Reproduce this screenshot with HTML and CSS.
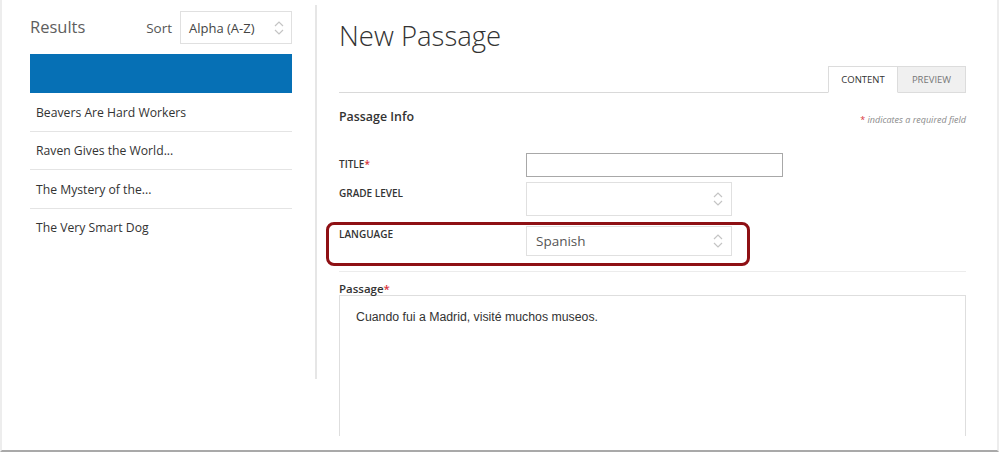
FILE: index.html
```html
<!DOCTYPE html>
<html>
<head>
<meta charset="utf-8">
<link rel="stylesheet" href="styles.css">
</head>
<body>
<div class="frame">
  <aside class="sidebar">
    <div class="side-head">
      <h2 class="results-title">Results</h2>
      <span class="sort-label">Sort</span>
      <div class="select sort-select">
        <span>Alpha (A-Z)</span>
        <svg class="arrows" width="10" height="18" viewBox="0 0 10 18"><path d="M1 7 L5 3 L9 7 M1 11 L5 15 L9 11" fill="none" stroke="#c4c4c4" stroke-width="1.2"/></svg>
      </div>
    </div>
    <div class="selected-bar"></div>
    <ul class="results">
      <li>Beavers Are Hard Workers</li>
      <li>Raven Gives the World...</li>
      <li>The Mystery of the...</li>
      <li>The Very Smart Dog</li>
    </ul>
  </aside>
  <div class="divider"></div>
  <main class="main">
    <h1 class="page-title">New Passage</h1>
    <div class="tabs-row">
      <div class="tabs">
        <span class="tab tab-active">CONTENT</span>
        <span class="tab tab-inactive">PREVIEW</span>
      </div>
    </div>
    <div class="info-row">
      <h3 class="section-title">Passage Info</h3>
      <span class="req-note"><span class="star">*</span> indicates a required field</span>
    </div>
    <div class="form-row row-title">
      <label class="field-label">TITLE<span class="star">*</span></label>
      <div class="text-input"></div>
    </div>
    <div class="form-row row-grade">
      <label class="field-label">GRADE LEVEL</label>
      <div class="select field-select grade-select">
        <span></span>
        <svg class="arrows" width="10" height="18" viewBox="0 0 10 18"><path d="M1 7 L5 3 L9 7 M1 11 L5 15 L9 11" fill="none" stroke="#c4c4c4" stroke-width="1.2"/></svg>
      </div>
    </div>
    <div class="form-row row-language">
      <label class="field-label lang-label">LANGUAGE</label>
      <div class="select field-select lang-select">
        <span>Spanish</span>
        <svg class="arrows" width="10" height="18" viewBox="0 0 10 18"><path d="M1 7 L5 3 L9 7 M1 11 L5 15 L9 11" fill="none" stroke="#c4c4c4" stroke-width="1.2"/></svg>
      </div>
      <div class="highlight"></div>
    </div>
    <div class="separator"></div>
    <div class="passage-label">Passage<span class="star">*</span></div>
    <div class="passage-box">Cuando fui a Madrid, visité muchos museos.</div>
  </main>
</div>
</body>
</html>
```
FILE: styles.css
```css
html, body {
  margin: 0;
  padding: 0;
  background: #fff;
}
body {
  font-family: "Open Sans", "Liberation Sans", sans-serif;
  color: #333;
}
.frame {
  width: 999px;
  height: 452px;
  box-sizing: border-box;
  border-left: 2px solid #ededed;
  border-right: 2px solid #ededed;
  border-bottom: 2px solid #a9a9a9;
  display: flex;
  align-items: flex-start;
}
.sidebar {
  flex: 0 0 262px;
  margin-left: 28px;
  padding-top: 11px;
}
.side-head {
  display: flex;
  align-items: center;
  height: 33px;
}
.results-title {
  flex: 1;
  margin: 0;
  font-size: 16.5px;
  font-weight: 400;
  color: #5e5e5e;
  line-height: 24px;
  position: relative;
  top: -1px;
}
.sort-label {
  font-size: 13.5px;
  color: #555;
  margin-right: 8px;
}
.select {
  box-sizing: border-box;
  border: 1px solid #e0e0e0;
  background: #fff;
  display: flex;
  align-items: center;
  justify-content: space-between;
  padding: 0 7px 0 8px;
}
.sort-select {
  flex: 0 0 112px;
  height: 33px;
  font-size: 13px;
  color: #444;
}
.arrows {
  display: block;
  flex: none;
}
.selected-bar {
  margin-top: 10px;
  height: 39px;
  background: #0670b5;
}
.results {
  list-style: none;
  margin: 0;
  padding: 0;
}
.results li {
  height: 36px;
  padding-top: 1.5px;
  line-height: 36px;
  padding-left: 6px;
  font-size: 12.2px;
  color: #333;
  border-bottom: 1px solid #e4e4e4;
}
.results li:last-child {
  border-bottom: none;
}
.divider {
  flex: 0 0 2px;
  margin-left: 23px;
  margin-top: 5px;
  height: 374px;
  background: #e6e6e6;
}
.main {
  flex: 0 0 627px;
  margin-left: 22px;
  padding-top: 18px;
}
.page-title {
  margin: 0;
  font-size: 27.5px;
  font-weight: 300;
  line-height: 36px;
  color: #333;
}
.tabs-row {
  margin-top: 12px;
  display: flex;
  justify-content: flex-end;
  border-bottom: 1px solid #d9d9d9;
}
.tabs {
  display: flex;
  flex: none;
  margin-bottom: -1px;
}
.tab {
  display: block;
  box-sizing: border-box;
  height: 27px;
  line-height: 25px;
  font-size: 9.5px;
  text-align: center;
  border: 1px solid #dcdcdc;
}
.tab-active {
  flex: 0 0 70px;
  width: 70px;
  background: #fff;
  color: #333;
  border-bottom-color: #fff;
}
.tab-inactive {
  flex: 0 0 68px;
  width: 68px;
  border-left: none;
  background: #f0f0f0;
  color: #777;
}
.info-row {
  margin-top: 15px;
  display: flex;
  justify-content: space-between;
  align-items: center;
  height: 18px;
}
.section-title {
  margin: 0;
  font-size: 12.4px;
  font-weight: 600;
  color: #333;
  line-height: 18px;
}
.req-note {
  font-size: 9px;
  font-style: italic;
  color: #8a8a8a;
  padding-top: 4px;
}
.star {
  color: #d9343a;
  font-style: normal;
}
.form-row {
  display: flex;
  align-items: flex-start;
  position: relative;
}
.row-title {
  margin-top: 27px;
}
.row-grade {
  margin-top: 5px;
}
.row-language {
  margin-top: 10px;
}
.field-label {
  flex: 0 0 187px;
  font-size: 10px;
  font-weight: 600;
  line-height: 14px;
  padding-top: 4px;
  color: #333;
}
.lang-label {
  padding-top: 1px;
}
.text-input {
  box-sizing: border-box;
  flex: 0 0 257px;
  height: 24px;
  border: 1px solid #a8a8a8;
  background: #fff;
}
.field-select {
  flex: 0 0 206px;
  padding-left: 9px;
  padding-right: 8px;
}
.grade-select {
  height: 34px;
}
.lang-select {
  height: 30px;
  font-size: 13.5px;
  color: #555;
}
.highlight {
  position: absolute;
  left: -13px;
  top: -4px;
  width: 424px;
  height: 44px;
  box-sizing: border-box;
  border: 3px solid #8e1014;
  border-radius: 8px;
}
.separator {
  margin-top: 15px;
  height: 1px;
  background: #ececec;
}
.passage-label {
  margin-top: 10px;
  font-size: 11.5px;
  font-weight: 600;
  line-height: 14px;
  color: #333;
}
.passage-box {
  margin-top: -1px;
  box-sizing: border-box;
  height: 141px;
  border: 1px solid #dedede;
  border-bottom: none;
  padding: 13px 16px 0;
  font-family: "Liberation Sans", Arial, sans-serif;
  font-size: 12.3px;
  line-height: 16px;
  color: #333;
}
```
